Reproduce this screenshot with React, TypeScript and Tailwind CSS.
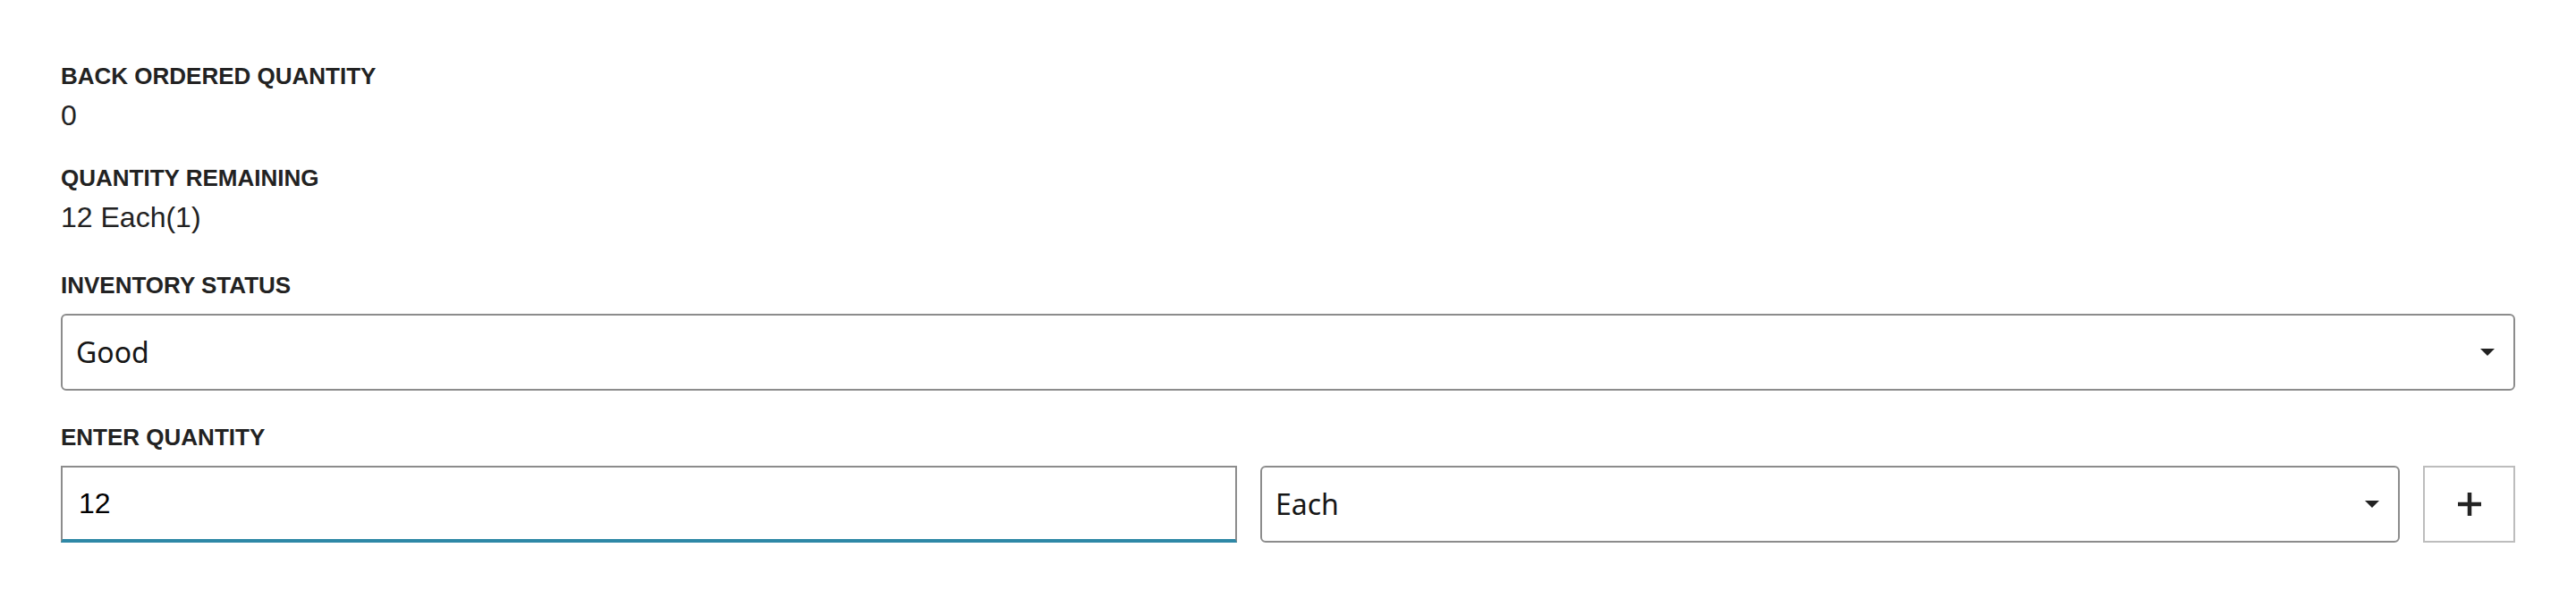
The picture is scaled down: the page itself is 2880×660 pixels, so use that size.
import React from 'react';

type ReadOnlyFieldProps = {
    label: string;
    value: string;
    className?: string;
};

const labelClass =
    "font-['Liberation_Sans',Arial,sans-serif] text-[26px] leading-[30px] font-bold text-[#222222]";

// Static label + value pair
const ReadOnlyField: React.FC<ReadOnlyFieldProps> = ({ label, value, className }) => (
    <div className={className}>
        <div className={labelClass}>{label}</div>
        <div className="mt-[11px] font-['Liberation_Sans',Arial,sans-serif] text-[32px] leading-[36px] text-[#222222]">
            {value}
        </div>
    </div>
);

const Caret: React.FC = () => (
    <svg width="16" height="8" viewBox="0 0 16 8" className="shrink-0">
        <path d="M0 0 L16 0 L8 8 Z" fill="#222222" />
    </svg>
);

type DropdownProps = {
    value: string;
    className?: string;
};

const Dropdown: React.FC<DropdownProps> = ({ value, className }) => (
    <div
        className={`flex h-[86px] items-center justify-between rounded-[6px] border-2 border-[#8c8c8c] bg-white pl-[15px] pr-[21px] ${className ?? ''}`}
    >
        <span className="font-['Noto_Sans','Open_Sans',sans-serif] text-[32px] leading-[40px] text-[#161616]">
            {value}
        </span>
        <Caret />
    </div>
);

const App: React.FC = () => {
    const [quantity, setQuantity] = React.useState('12');

    return (
        <div className="min-h-screen bg-white px-[68px] pt-[70px]">
            <ReadOnlyField label="BACK ORDERED QUANTITY" value="0" />
            <ReadOnlyField label="QUANTITY REMAINING" value="12 Each(1)" className="mt-[37px]" />

            {/* Inventory status */}
            <div className="mt-[43px]">
                <div className={labelClass}>INVENTORY STATUS</div>
                <Dropdown value="Good" className="mt-[17px]" />
            </div>

            {/* Quantity entry */}
            <div className="mt-[37px]">
                <div className={labelClass}>ENTER QUANTITY</div>
                <div className="mt-[17px] flex items-stretch gap-[26px]">
                    <input
                        value={quantity}
                        onChange={(e) => setQuantity(e.target.value)}
                        className="h-[86px] w-[1315px] shrink-0 border-x-2 border-t-2 border-b-4 border-x-[#8c8c8c] border-t-[#8c8c8c] border-b-[#2e88a6] bg-white pl-[18px] font-['Liberation_Sans',Arial,sans-serif] text-[32px] text-black outline-none"
                    />
                    <Dropdown value="Each" className="flex-1" />
                    <button className="flex h-[86px] w-[103px] shrink-0 items-center justify-center border-2 border-[#bdbdbd] bg-white">
                        <svg width="26" height="26" viewBox="0 0 26 26">
                            <path d="M13 0 V26 M0 13 H26" stroke="#232323" strokeWidth="4.5" />
                        </svg>
                    </button>
                </div>
            </div>
        </div>
    );
};

export default App;
